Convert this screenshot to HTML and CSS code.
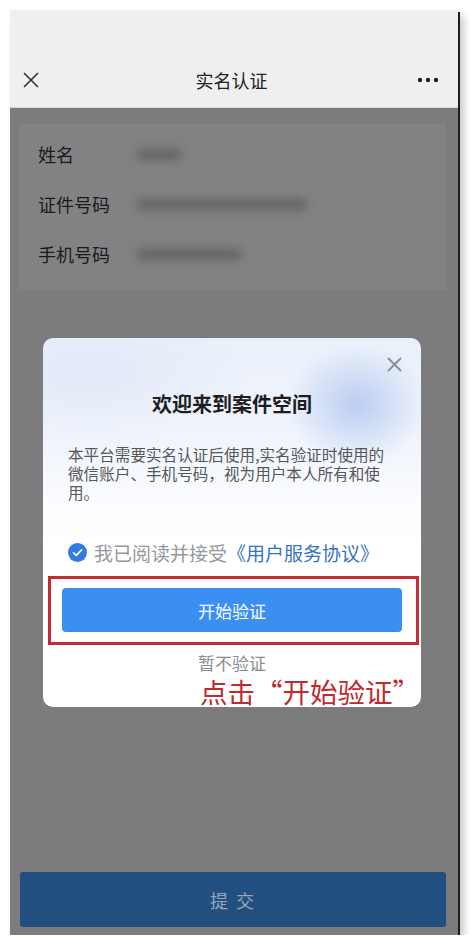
FILE: index.html
```html
<!DOCTYPE html>
<html lang="zh-CN">
<head>
  <meta charset="UTF-8" />
  <meta name="viewport" content="width=device-width, initial-scale=1.0" />
  <title>实名认证</title>
  <link rel="stylesheet" href="styles.css">
</head>
<body>
  <div class="phone">
    <div class="topbar">
      <div class="nav">
        <svg class="nav-close" width="18" height="18" viewBox="0 0 18 18">
          <path d="M2 2L16 16M16 2L2 16" stroke="#333" stroke-width="1.6" fill="none" />
        </svg>
        <span class="nav-title">实名认证</span>
        <svg class="nav-more" width="22" height="6" viewBox="0 0 22 6">
          <circle cx="3" cy="3" r="2.2" fill="#222" />
          <circle cx="11" cy="3" r="2.2" fill="#222" />
          <circle cx="19" cy="3" r="2.2" fill="#222" />
        </svg>
      </div>
    </div>

    <div class="main">
      <div class="info-card">
        <div class="info-row">
          <span class="info-label">姓名</span>
          <span class="blur-value v-name"></span>
        </div>
        <div class="info-row">
          <span class="info-label">证件号码</span>
          <span class="blur-value v-id"></span>
        </div>
        <div class="info-row">
          <span class="info-label">手机号码</span>
          <span class="blur-value v-phone"></span>
        </div>
      </div>

      <button class="submit-btn">提 交</button>
    </div>

    <div class="modal">
      <svg class="modal-close" width="15" height="15" viewBox="0 0 15 15">
        <path d="M1 1L14 14M14 1L1 14" stroke="#8a8d93" stroke-width="1.8" fill="none" />
      </svg>
      <h2 class="modal-title">欢迎来到案件空间</h2>
      <p class="modal-text">本平台需要实名认证后使用,实名验证时使用的微信账户、手机号码，视为用户本人所有和使用。</p>
      <div class="agree-row">
        <svg class="check" width="19" height="19" viewBox="0 0 19 19">
          <circle cx="9.5" cy="9.5" r="9.5" fill="#2f7be0" />
          <path d="M5.5 9.8L8.3 12.4L13.6 6.8" stroke="#fff" stroke-width="1.7" fill="none" stroke-linecap="round" stroke-linejoin="round" />
        </svg>
        <span class="agree-text">我已阅读并接受</span><span class="agree-link">《用户服务协议》</span>
      </div>
      <div class="mark-box">
        <button class="start-btn">开始验证</button>
      </div>
      <div class="skip">暂不验证</div>
      <div class="mark-text">点击“开始验证”</div>
    </div>
  </div>
</body>
</html>
```

FILE: styles.css
```css
body {
  margin: 0;
  background: #fff;
  font-family: "Noto Sans CJK SC", "Noto Sans", sans-serif;
}
.phone {
  position: relative;
  margin: 10px 0 0 10px;
  width: 448px;
  height: 925px;
  background: #7c7c7e;
  display: flex;
  flex-direction: column;
  box-shadow: 2px 2px 0 #1e1e1e, 5px 6px 8px rgba(0, 0, 0, 0.25);
}
.topbar {
  height: 98px;
  background: #efefef;
  display: flex;
  align-items: flex-end;
  border-bottom: 1px solid #d8d8d8;
  box-sizing: border-box;
}
.nav {
  width: 100%;
  height: 54px;
  display: flex;
  align-items: center;
  justify-content: space-between;
  padding: 0 19px 0 12px;
  box-sizing: border-box;
}
.nav-title {
  font-size: 18px;
  color: #222;
  margin-left: 6px;
}
.main {
  flex: 1;
  display: flex;
  flex-direction: column;
  justify-content: space-between;
  padding: 16px 12px 8px 9px;
}
.info-card {
  background: #828284;
  padding: 5px 0 11px 19px;
}
.info-row {
  height: 50px;
  display: flex;
  align-items: center;
}
.info-label {
  width: 98px;
  font-size: 18px;
  color: #1a1a1a;
}
.blur-value {
  height: 13px;
  border-radius: 7px;
  background: #68686a;
  filter: blur(4px);
}
.v-name { width: 46px; }
.v-id { width: 172px; }
.v-phone { width: 106px; }
.submit-btn {
  height: 55px;
  border: none;
  border-radius: 3px;
  background: #214f80;
  color: #9aa6b8;
  font-family: inherit;
  font-size: 18px;
  letter-spacing: 2px;
  margin-left: 1px;
}
.modal {
  position: absolute;
  left: 33px;
  top: 328px;
  width: 378px;
  height: 369px;
  border-radius: 10px;
  padding: 0 19px;
  box-sizing: border-box;
  display: flex;
  flex-direction: column;
  background:
    radial-gradient(ellipse 70px 60px at 83% 18%, rgba(170, 192, 238, 0.75), rgba(170, 192, 238, 0)),
    radial-gradient(ellipse 160px 70px at 12% 10%, rgba(225, 233, 248, 0.9), rgba(225, 233, 248, 0)),
    linear-gradient(180deg, #eaf0fa 0%, #f1f5fc 30%, #fbfcfe 45%, #ffffff 55%);
}
.modal-close {
  position: absolute;
  top: 19px;
  right: 19px;
}
.modal-title {
  margin: 52px 0 0;
  height: 28px;
  line-height: 28px;
  text-align: center;
  font-size: 20px;
  font-weight: 700;
  color: #1d1d1f;
}
.modal-text {
  margin: 27px 0 0 6px;
  font-size: 15.6px;
  line-height: 19px;
  color: #55575b;
  padding-right: 16px;
}
.agree-row {
  margin: 38px 0 0 6px;
  height: 24px;
  display: flex;
  align-items: center;
  font-size: 19px;
}
.check {
  margin-right: 7px;
}
.agree-text {
  color: #96989c;
}
.agree-link {
  color: #3672c4;
}
.mark-box {
  margin: 12px -17px 0 -14px;
  border: 3px solid #c62a32;
  padding: 9px 14px 10px 11px;
}
.start-btn {
  width: 100%;
  height: 44px;
  border: none;
  border-radius: 4px;
  background: #3a8ff0;
  color: #fff;
  font-family: inherit;
  font-size: 17px;
}
.skip {
  margin-top: 6px;
  height: 24px;
  line-height: 24px;
  text-align: center;
  font-size: 17px;
  color: #8a8c90;
}
.mark-text {
  position: absolute;
  right: 1px;
  top: 340px;
  line-height: 27px;
  font-size: 27.5px;
  color: #c02a2e;
}
```
